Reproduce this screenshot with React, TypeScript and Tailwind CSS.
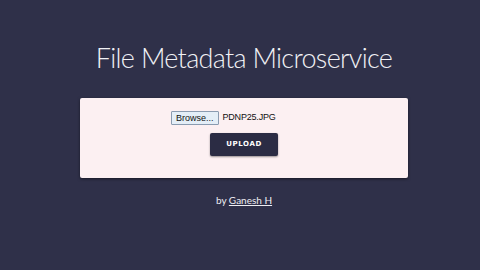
import React from "react";

export default function App() {
  return (
    <div className="w-[480px] h-[270px] bg-[#2f3049] flex flex-col items-center overflow-hidden font-['Lato',sans-serif]">
      <div className="ml-[8px] flex flex-col items-center">
        <h1 className="mt-[40px] text-[27px] leading-[36px] font-light text-[#f1f1f5] tracking-[-0.7px]">
          File Metadata Microservice
        </h1>
        <div className="mt-[22px] w-[328px] h-[80px] bg-[#fcf0f2] rounded-[2px] shadow-[0_1px_3px_rgba(0,0,0,0.5)] flex flex-col items-center">
          <div className="mt-[13px] ml-[91px] self-start flex items-center gap-[4px] font-['Liberation_Sans',sans-serif]">
            <span className="h-[14px] px-[4px] border border-[#8a9bb0] bg-[#e4eef7] text-[9px] leading-[12px] text-[#111] rounded-[1px]">
              Browse...
            </span>
            <span className="text-[9px] text-[#111] tracking-[-0.2px]">PDNP25.JPG</span>
          </div>
          <button className="mt-[8px] w-[68px] h-[23px] bg-[#2b2c44] rounded-[2px] text-white text-[7px] font-bold tracking-[0.6px] shadow-[0_1px_2px_rgba(0,0,0,0.4)] font-['DejaVu_Sans',sans-serif]">
            UPLOAD
          </button>
        </div>
        <div className="mt-[15px] text-[10px] text-[#eeeef3]">
          by <span className="underline">Ganesh H</span>
        </div>
      </div>
    </div>
  );
}
